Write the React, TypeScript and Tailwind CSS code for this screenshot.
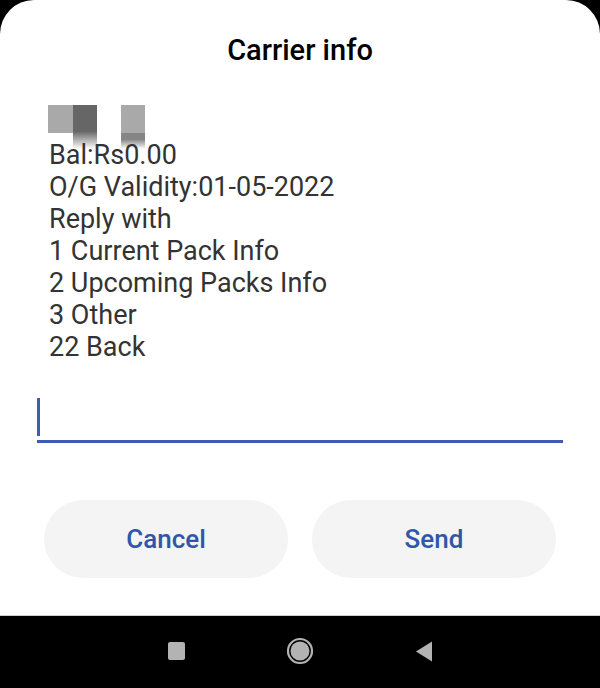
import React from 'react';

const lines = [
  'Bal:Rs0.00',
  'O/G Validity:01-05-2022',
  'Reply with',
  '1 Current Pack Info',
  '2 Upcoming Packs Info',
  '3 Other',
  '22 Back',
];

const App: React.FC = () => {
  return (
    <div className="w-[600px] h-[688px] bg-black flex flex-col overflow-hidden" style={{ fontFamily: 'Roboto, "Noto Sans", sans-serif' }}>
      <div className="h-[615px] bg-white rounded-t-[34px] flex flex-col">
        <h1 className="mt-[34px] h-[32px] leading-[32px] text-center text-[29px] font-medium text-black">Carrier info</h1>

        <div className="mt-[39px] pl-[48px] pr-[37px]">
          {/* blurred sender stamp */}
          <div className="flex h-[34px]">
            <div className="w-[25px] h-[28px] bg-[#a9a9a9]" />
            <div className="w-[24px] h-[44px] bg-gradient-to-b from-[#666666] from-60% to-white/0" />
            <div className="w-[24px]" />
            <div className="w-[24px] h-[44px] flex flex-col">
              <div className="h-[28px] bg-[#a9a9a9]" />
              <div className="flex-1 bg-gradient-to-b from-[#858585] from-40% to-white/0" />
            </div>
          </div>
          <div className="relative pl-[1px] text-[27px] leading-[32px] text-[#333333]">
            {lines.map((l) => (
              <div key={l}>{l}</div>
            ))}
          </div>
        </div>

        <div className="mt-[35px] mx-[37px] h-[45px] border-b-[3px] border-[#3d5db1] flex items-end pb-[4px]">
          <div className="w-[3px] h-[38px] bg-[#3d5db1]" />
        </div>

        <div className="mt-[57px] mx-[44px] flex gap-[24px]">
          <button className="flex-1 h-[78px] rounded-full bg-[#f4f4f4] text-[26px] font-medium text-[#2f56a9]">Cancel</button>
          <button className="flex-1 h-[78px] rounded-full bg-[#f4f4f4] text-[26px] font-medium text-[#2f56a9]">Send</button>
        </div>
      </div>

      <div className="flex-1 border-t border-[#cfcfcf] flex items-center justify-center gap-[101px] pb-[2px]">
        <div className="w-[17px] h-[18px] bg-[#b3b3b3] rounded-[2px]" />
        <svg width="28" height="28" viewBox="0 0 28 28">
          <circle cx="14" cy="14" r="12" fill="none" stroke="#b3b3b3" strokeWidth="2.2" />
          <circle cx="14" cy="14" r="9.5" fill="#b3b3b3" />
        </svg>
        <svg width="18" height="21" viewBox="0 0 18 21">
          <polygon points="17,0.5 17,20.5 1,10.5" fill="#b3b3b3" />
        </svg>
      </div>
    </div>
  );
};

export default App;
